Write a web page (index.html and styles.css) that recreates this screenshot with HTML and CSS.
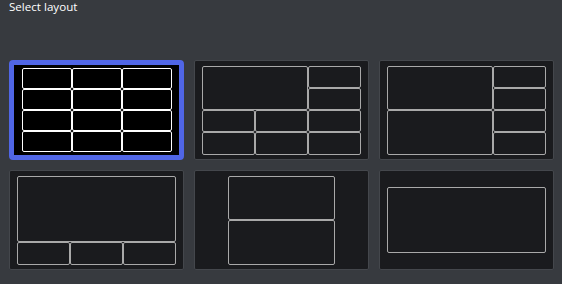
FILE: index.html
```html
<!doctype html>
<html>
  <head>
    <title>Select layout</title>
    <link rel="stylesheet" href="styles.css">
  </head>
  <body>
    <div class='panel'>
      <div class='title'>Select layout</div>
      <div class='layouts'>
        <!-- 3 x 4 grid -->
        <div class='layout selected'>
          <div class='preview cols-3 rows-4'>
            <div></div><div></div><div></div>
            <div></div><div></div><div></div>
            <div></div><div></div><div></div>
            <div></div><div></div><div></div>
          </div>
        </div>
        <!-- big top left + small -->
        <div class='layout'>
          <div class='preview cols-3 rows-4'>
            <div class='span-c2 span-r2'></div>
            <div></div><div></div>
            <div></div><div></div><div></div>
            <div></div><div></div><div></div>
          </div>
        </div>
        <!-- two big left + right column -->
        <div class='layout'>
          <div class='preview cols-3 rows-4 flow-col'>
            <div class='span-c2 span-r2'></div>
            <div class='span-c2 span-r2'></div>
            <div></div><div></div><div></div><div></div>
          </div>
        </div>
        <!-- big top + bottom row -->
        <div class='layout'>
          <div class='preview cols-3 rows-4'>
            <div class='span-c3 span-r3'></div>
            <div></div><div></div><div></div>
          </div>
        </div>
        <!-- two stacked -->
        <div class='layout'>
          <div class='preview cols-2 rows-4'>
            <div class='span-c2 span-r2'></div>
            <div class='span-c2 span-r2'></div>
          </div>
        </div>
        <!-- single -->
        <div class='layout'>
          <div class='preview cols-3 rows-3'>
            <div class='span-c3 span-r3'></div>
          </div>
        </div>
      </div>
    </div>
  </body>
</html>
```

FILE: styles.css
```css
html, body {
  margin: 0;
  background-color: #373a3f;
}

.panel {
  padding: 0 9px;
  font-family: "Open Sans", "Noto Sans", sans-serif;
}

.title {
  color: #fff;
  font-size: 11.6px;
  line-height: 16px;
  height: 61px;
  margin-top: -1px;
}

.layouts {
  display: grid;
  grid-template-columns: repeat(3, 175px);
  grid-auto-rows: 100px;
  gap: 10px;
  margin-top: -14px;
  padding-top: 14px;
}

/* card */
.layout {
  box-sizing: border-box;
  display: flex;
  align-items: center;
  justify-content: center;
  background-color: #1a1b1e;
  border: 1px solid #44474c;
  border-radius: 2px;
  --cw: 53.33px;
  --rh: 22.25px;
}

.layout.selected {
  background-color: #000;
  border: 5px solid #5066e6;
  border-radius: 4px;
  --cw: 50px;
  --rh: 21px;
}

/* preview grid */
.preview {
  display: grid;
}

.preview > div {
  box-sizing: border-box;
  border: 1px solid #a9a9a9;
  border-radius: 2px;
}

.selected .preview > div {
  border-color: #fff;
}

.cols-2 { grid-template-columns: repeat(2, var(--cw)); }
.cols-3 { grid-template-columns: repeat(3, var(--cw)); }
.rows-3 { grid-template-rows: repeat(3, var(--rh)); }
.rows-4 { grid-template-rows: repeat(4, var(--rh)); }

.flow-col {
  grid-auto-flow: column;
}

.span-c2 { grid-column: span 2; }
.span-c3 { grid-column: span 3; }
.span-r2 { grid-row: span 2; }
.span-r3 { grid-row: span 3; }
```
